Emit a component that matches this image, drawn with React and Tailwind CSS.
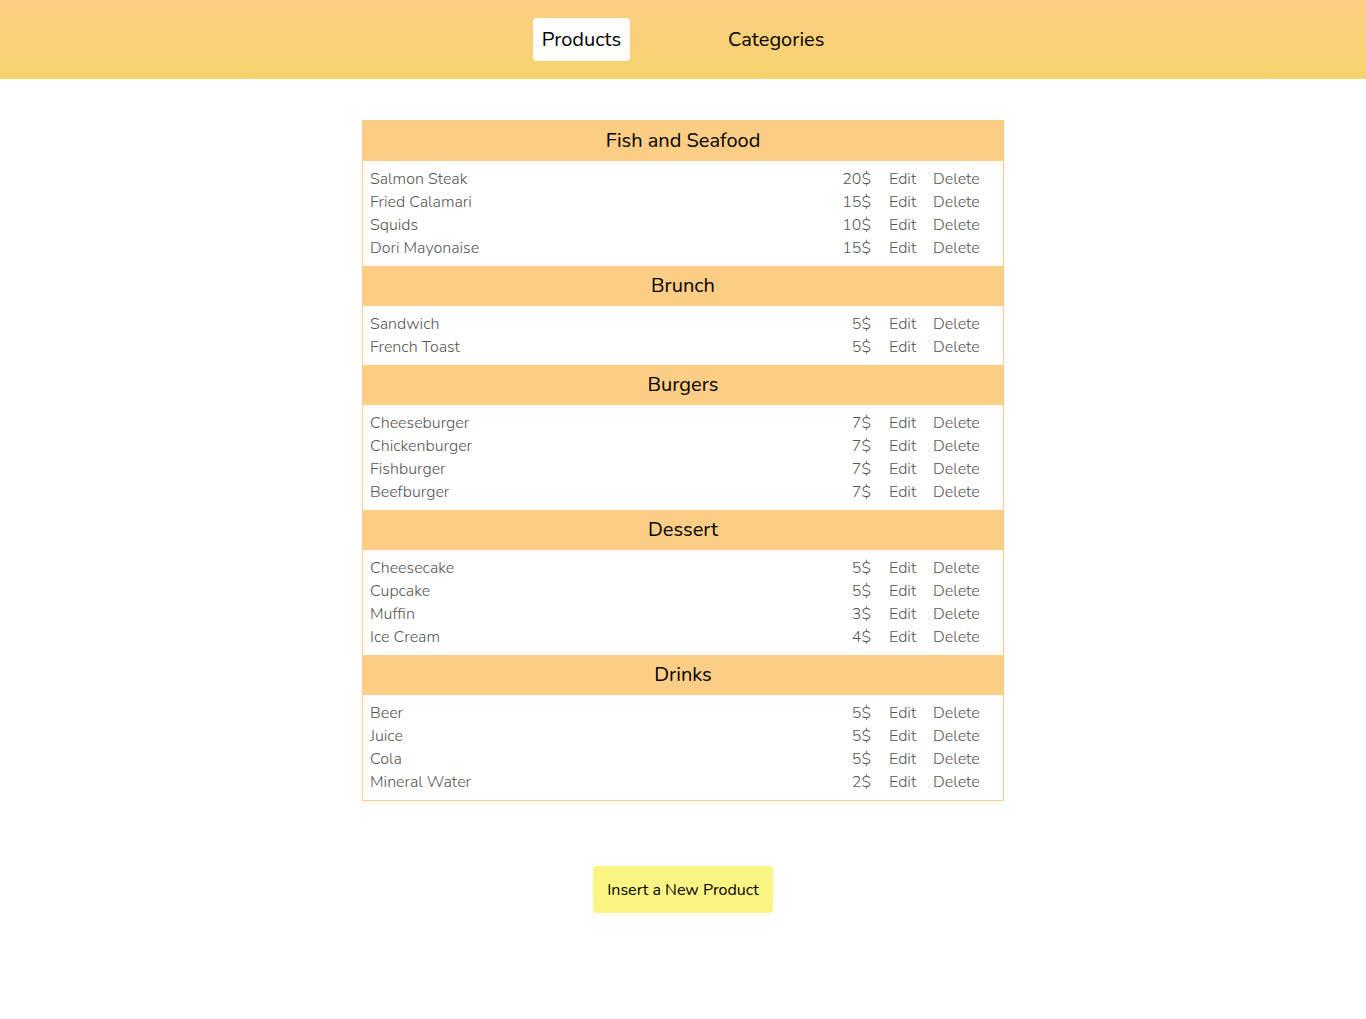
import React from "react";

const menu = [
  {
    name: "Fish and Seafood",
    items: [
      ["Salmon Steak", 20],
      ["Fried Calamari", 15],
      ["Squids", 10],
      ["Dori Mayonaise", 15],
    ],
  },
  { name: "Brunch", items: [["Sandwich", 5], ["French Toast", 5]] },
  {
    name: "Burgers",
    items: [
      ["Cheeseburger", 7],
      ["Chickenburger", 7],
      ["Fishburger", 7],
      ["Beefburger", 7],
    ],
  },
  {
    name: "Dessert",
    items: [
      ["Cheesecake", 5],
      ["Cupcake", 5],
      ["Muffin", 3],
      ["Ice Cream", 4],
    ],
  },
  {
    name: "Drinks",
    items: [
      ["Beer", 5],
      ["Juice", 5],
      ["Cola", 5],
      ["Mineral Water", 2],
    ],
  },
];

export default function App() {
  return (
    <div className="min-h-[1019px] bg-white font-['Nunito','Open_Sans',sans-serif] text-black">
      {/* NAV */}
      <nav className="h-[79px] bg-gradient-to-b from-[#fccd84] to-[#f6d46c] flex items-center justify-center gap-[89px]">
        <button className="h-[43px] px-[9px] rounded bg-white text-[20px] leading-none">
          Products
        </button>
        <button className="h-[43px] px-[9px] text-[20px] leading-none">Categories</button>
      </nav>

      {/* MENU TABLE */}
      <div className="w-[642px] mx-auto mt-[41px] border border-[#fccd84]">
        {menu.map((cat) => (
          <div key={cat.name}>
            <div className="h-[40px] bg-[#fccd84] flex items-center justify-center text-[20px]">
              {cat.name}
            </div>
            <div className="px-[7px] pt-[6px] pb-[7px]">
              {cat.items.map(([item, price]) => (
                <div
                  key={item}
                  className="h-[23px] flex items-center text-[16px] font-light text-[#555]"
                >
                  <span className="flex-1">{item}</span>
                  <span className="w-[40px] text-right">{price}$</span>
                  <span className="ml-[18px] w-[44px]">Edit</span>
                  <span className="w-[63px]">Delete</span>
                </div>
              ))}
            </div>
          </div>
        ))}
      </div>

      {/* INSERT */}
      <div className="flex justify-center mt-[65px]">
        <button className="w-[180px] h-[47px] rounded bg-[#fdf583] text-[16px]">
          Insert a New Product
        </button>
      </div>
    </div>
  );
}
